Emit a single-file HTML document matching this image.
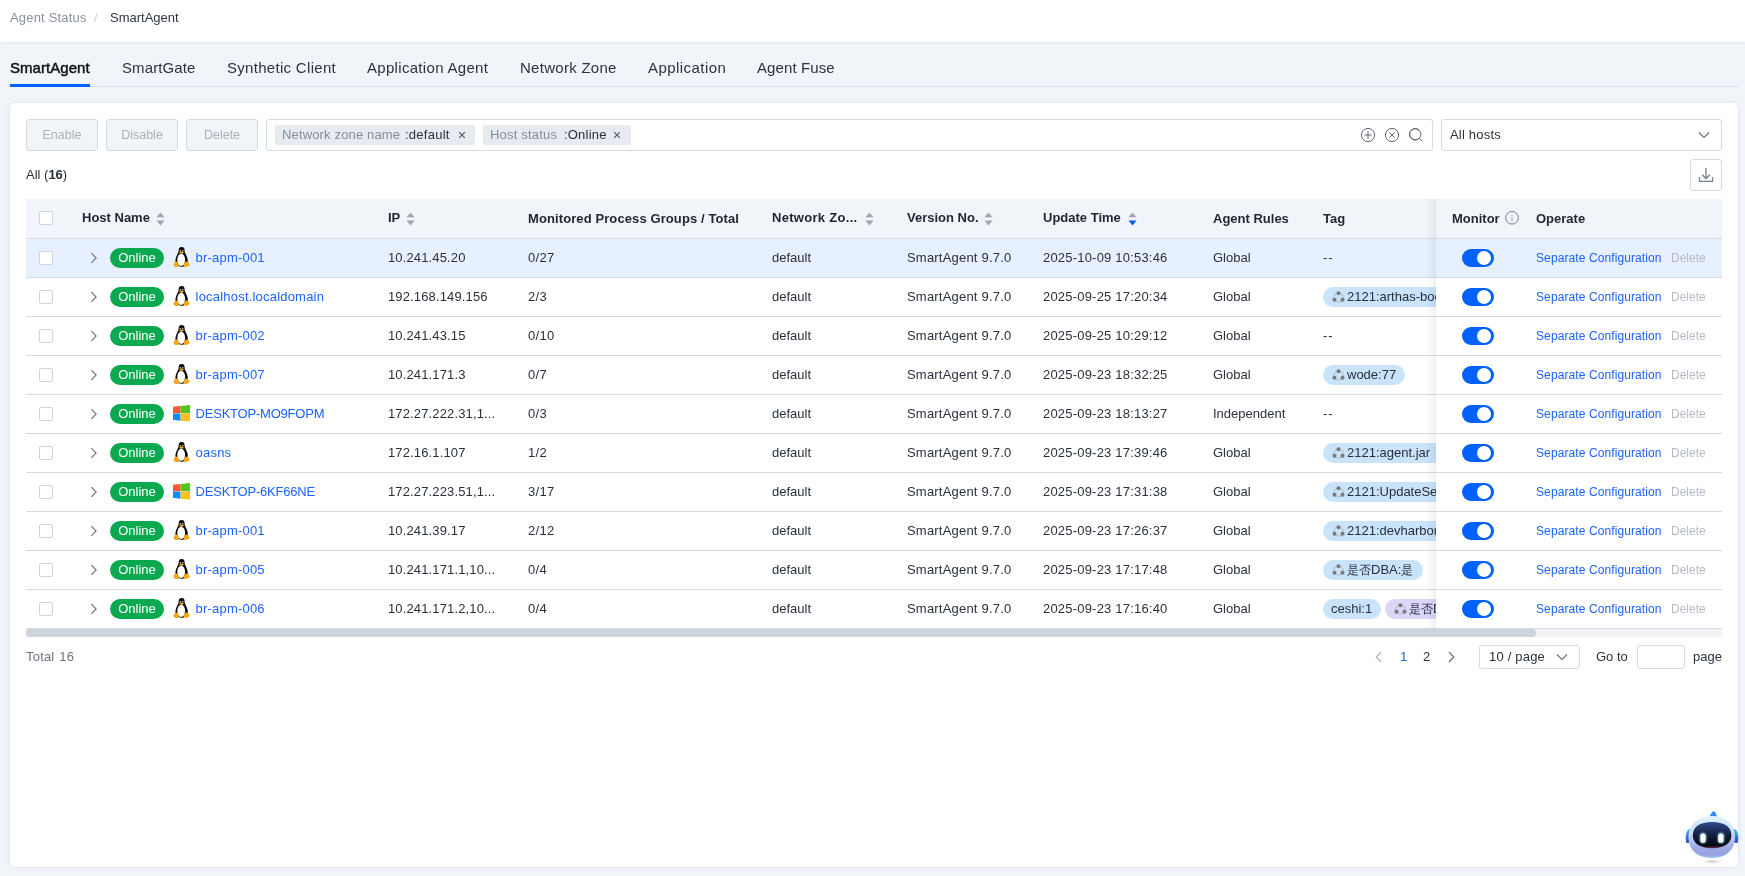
<!DOCTYPE html><html><head><meta charset="utf-8"><style>
*{box-sizing:border-box;margin:0;padding:0}
html,body{width:1745px;height:876px;overflow:hidden}
body{background:#f1f4f8;font-family:"Liberation Sans",sans-serif;color:#2a313c;position:relative;font-size:13px}
.a{position:absolute;white-space:nowrap}
.top{position:absolute;left:0;top:0;width:1745px;height:42px;background:#fff;box-shadow:0 1px 3px rgba(0,0,0,0.07)}
.tab{position:absolute;top:58px;font-size:15px;line-height:20px;color:#2b3340;white-space:nowrap}
.card{position:absolute;left:10px;top:103px;width:1728px;height:764px;background:#fff;border-radius:5px;box-shadow:0 0 4px rgba(0,0,0,0.1)}
.btn{position:absolute;top:119px;width:72px;height:32px;border:1px solid #d5dbe3;background:#f2f5f8;border-radius:3px;color:#a9b1bd;font-size:12.5px;line-height:30px;text-align:center}
.inp{position:absolute;border:1px solid #d5dbe3;border-radius:3px;background:#fff}
.ftag{position:absolute;top:125px;height:20px;background:#e7eaef;border-radius:2px;line-height:20px;font-size:13px;white-space:nowrap}
.ftag .k{color:#878e99}.ftag .v{color:#2a313c}
.th{position:absolute;top:199px;height:39px;line-height:37px;font-weight:bold;color:#1f2631;white-space:nowrap}
.sort{position:absolute;top:212px}
.row{position:absolute;left:26px;width:1696px;height:39px;border-bottom:1px solid #d6dbe3}
.cell{position:absolute;line-height:38px;white-space:nowrap;color:#2a313c}
.cb{position:absolute;width:14px;height:14px;border:1px solid #cfd4db;border-radius:2px;background:#fff}
.chev{position:absolute}
.badge{position:absolute;width:54px;height:20px;border-radius:10px;background:#0aa84f;color:#fff;text-align:center;line-height:20px;font-size:13px}
.os{position:absolute}
.link{color:#1d63ff}
.tag{position:absolute;height:20px;border-radius:10px;background:#c9e3fb;line-height:20px;font-size:13px;white-space:nowrap;color:#27303b;overflow:hidden}
.tag.p{background:#dcd6fa}
.ti{position:absolute;top:3.5px}
.tog{position:absolute;width:32px;height:18px;border-radius:9px;background:#0061ff}
.tog:after{content:"";position:absolute;right:3px;top:2px;width:14px;height:14px;border-radius:7px;background:#fff}
</style></head><body><div style="position:absolute;left:0;top:0;width:1745px;height:876px;will-change:transform">

<div class="top"></div>
<div class="a" style="left:10px;top:10px;line-height:16px;font-size:13px;color:#8a919b;letter-spacing:0.18px">Agent Status</div>
<div class="a" style="left:94px;top:10px;line-height:16px;font-size:13px;color:#cdd2d9">/</div>
<div class="a" style="left:110px;top:10px;line-height:16px;font-size:13px;color:#2f3641">SmartAgent</div>
<div class="a" style="left:10px;top:86px;width:1728px;height:1px;background:#d9dde3"></div>
<div class="tab" style="left:10px;color:#0d0f12;-webkit-text-stroke:0.45px #0d0f12;letter-spacing:0.05px">SmartAgent</div>
<div class="a" style="left:10px;top:84px;width:80px;height:3px;background:#0061ff"></div>
<div class="tab" style="left:122px;letter-spacing:0.1px">SmartGate</div>
<div class="tab" style="left:227px;letter-spacing:0.3px">Synthetic Client</div>
<div class="tab" style="left:367px;letter-spacing:0.31px">Application Agent</div>
<div class="tab" style="left:520px;letter-spacing:0.28px">Network Zone</div>
<div class="tab" style="left:648px;letter-spacing:0.45px">Application</div>
<div class="tab" style="left:757px;letter-spacing:0.1px">Agent Fuse</div>
<div class="card"></div>
<div class="btn" style="left:26px">Enable</div>
<div class="btn" style="left:106px">Disable</div>
<div class="btn" style="left:186px">Delete</div>
<div class="inp" style="left:266px;top:119px;width:1167px;height:32px"></div>
<div class="ftag" style="left:275px;width:200px"><span class="a k" style="left:7px;letter-spacing:0.15px">Network zone name</span><span class="a v" style="left:130px;letter-spacing:0.25px">:default</span><svg class="a" style="left:183px;top:6px" width="8" height="8" viewBox="0 0 8 8"><path d="M1.2 1.2L6.8 6.8M6.8 1.2L1.2 6.8" stroke="#50575f" stroke-width="1.1"/></svg></div>
<div class="ftag" style="left:483px;width:148px"><span class="a k" style="left:7px;letter-spacing:0.2px">Host status</span><span class="a v" style="left:81px;letter-spacing:0.2px">:Online</span><svg class="a" style="left:130px;top:6px" width="8" height="8" viewBox="0 0 8 8"><path d="M1.2 1.2L6.8 6.8M6.8 1.2L1.2 6.8" stroke="#50575f" stroke-width="1.1"/></svg></div>
<svg class="a" style="left:1359px;top:126px" width="60" height="18" viewBox="0 0 60 18">
<g fill="none" stroke="#5f6773" stroke-width="1">
<circle cx="9" cy="9" r="6.6"/><path d="M9 5.4V12.6M5.4 9H12.6"/>
<circle cx="33" cy="9" r="6.6"/><path d="M30.4 6.4L35.6 11.6M35.6 6.4L30.4 11.6"/>
<circle cx="56" cy="8.3" r="5.6"/><path d="M60 12.5L63.5 16" />
</g></svg>
<svg class="a" style="left:1405px;top:126px" width="22" height="20" viewBox="0 0 22 20"><g fill="none" stroke="#5f6773" stroke-width="1"><circle cx="10.3" cy="8.3" r="5.6"/><path d="M14.3 12.3L17.3 15.3"/></g></svg>
<div class="inp" style="left:1441px;top:119px;width:281px;height:32px"></div>
<div class="a" style="left:1450px;top:119px;line-height:32px;font-size:13px;color:#2a313c;letter-spacing:0.2px">All hosts</div>
<svg class="a" style="left:1698px;top:131px" width="12" height="8" viewBox="0 0 12 8"><path d="M1 1.5L6 6.5L11 1.5" fill="none" stroke="#6b7380" stroke-width="1.2"/></svg>
<div class="a" style="left:26px;top:167px;line-height:16px;font-size:13px;color:#2a313c">All (<b>16</b>)</div>
<div class="inp" style="left:1690px;top:159px;width:32px;height:32px"></div>
<svg class="a" style="left:1697px;top:166px" width="18" height="18" viewBox="0 0 18 18"><g fill="none" stroke="#7a808a" stroke-width="1.3"><path d="M9 2V12.5M5.2 8.8L9 12.5L12.8 8.8"/><path d="M2.5 11V15.3H15.5V11"/></g></svg>
<div class="a" style="left:26px;top:199px;width:1696px;height:40px;background:#f1f4f8;border-bottom:1px solid #d8dce3"></div>
<div class="cb" style="left:39px;top:211px"></div>
<div class="th" style="left:82px;top:199px">Host Name</div>
<div class="th" style="left:388px;top:199px">IP</div>
<div class="th" style="left:528px;top:200px"><span style='letter-spacing:0.1px'>Monitored Process Groups / Total</span></div>
<div class="th" style="left:772px;top:199px"><span style='letter-spacing:0.3px'>Network Zo...</span></div>
<div class="th" style="left:907px;top:199px">Version No.</div>
<div class="th" style="left:1043px;top:199px">Update Time</div>
<div class="th" style="left:1213px;top:200px">Agent Rules</div>
<div class="th" style="left:1323px;top:200px">Tag</div>
<svg class="sort" style="left:156px" width="9" height="14" viewBox="0 0 9 14"><path d="M0.5 5.2 L4.5 0.4 L8.5 5.2Z" fill="#9ea6b3"/><path d="M0.5 8.4 L4.5 13.4 L8.5 8.4Z" fill="#9ea6b3"/></svg>
<svg class="sort" style="left:406px" width="9" height="14" viewBox="0 0 9 14"><path d="M0.5 5.2 L4.5 0.4 L8.5 5.2Z" fill="#9ea6b3"/><path d="M0.5 8.4 L4.5 13.4 L8.5 8.4Z" fill="#9ea6b3"/></svg>
<svg class="sort" style="left:865px" width="9" height="14" viewBox="0 0 9 14"><path d="M0.5 5.2 L4.5 0.4 L8.5 5.2Z" fill="#9ea6b3"/><path d="M0.5 8.4 L4.5 13.4 L8.5 8.4Z" fill="#9ea6b3"/></svg>
<svg class="sort" style="left:984px" width="9" height="14" viewBox="0 0 9 14"><path d="M0.5 5.2 L4.5 0.4 L8.5 5.2Z" fill="#9ea6b3"/><path d="M0.5 8.4 L4.5 13.4 L8.5 8.4Z" fill="#9ea6b3"/></svg>
<svg class="sort" style="left:1128px" width="9" height="14" viewBox="0 0 9 14"><path d="M0.5 5.2 L4.5 0.4 L8.5 5.2Z" fill="#9ea6b3"/><path d="M0.5 8.4 L4.5 13.4 L8.5 8.4Z" fill="#0a5cff"/></svg>
<div class="row" style="top:239px;background:#e7f0fe"></div>
<div class="cb" style="left:39px;top:251px"></div>
<svg class="chev" style="left:90px;top:252px" width="8" height="12" viewBox="0 0 8 12"><path d="M1.4 1.2L6.1 6L1.4 10.8" fill="none" stroke="#737373" stroke-width="1.15"/></svg>
<div class="badge" style="left:110px;top:248px">Online</div>
<svg class="os" style="left:173px;top:247px" width="17" height="21" viewBox="0 0 17 21"><path d="M5.7 4.6 C4.4 7.6 2.5 10.6 2.4 13.6 C2.4 16.6 4.8 19.6 8.5 19.7 C12.2 19.6 14.8 16.6 14.8 13.4 C14.6 10.4 12.8 7.6 11.5 4.6 Z" fill="#0b0b0b"/><ellipse cx="8.6" cy="3.5" rx="3.0" ry="3.4" fill="#0b0b0b"/><ellipse cx="8.2" cy="12.9" rx="3.9" ry="6.1" fill="#fff"/><circle cx="7.3" cy="3.8" r="0.75" fill="#d8d8d8"/><circle cx="9.8" cy="3.8" r="0.75" fill="#d8d8d8"/><ellipse cx="8.5" cy="5.7" rx="2.2" ry="1.1" fill="#efa91c"/><path d="M0.3 18.2 L1.8 14.8 L4.5 14.6 L6.4 17.8 L5.6 19.9 L2.2 20.1 Z" fill="#efa91c"/><path d="M10.8 19.8 L10.6 17.2 L12.6 14.5 L15.2 14.9 L17 18 L13.5 20.1 Z" fill="#efa91c"/></svg>
<div class="cell link" style="left:195.6px;top:239px;letter-spacing:0.2px">br-apm-001</div>
<div class="cell" style="left:388px;top:239px;letter-spacing:0.14px">10.241.45.20</div>
<div class="cell" style="left:528px;top:239px;letter-spacing:0.3px">0/27</div>
<div class="cell" style="left:772px;top:239px">default</div>
<div class="cell" style="left:907px;top:239px;letter-spacing:0.2px">SmartAgent 9.7.0</div>
<div class="cell" style="left:1043px;top:239px;letter-spacing:0.2px">2025-10-09 10:53:46</div>
<div class="cell" style="left:1213px;top:239px">Global</div>
<div class="cell" style="left:1323px;top:239px;letter-spacing:1px">--</div>
<div class="row" style="top:278px;background:#fff"></div>
<div class="cb" style="left:39px;top:290px"></div>
<svg class="chev" style="left:90px;top:291px" width="8" height="12" viewBox="0 0 8 12"><path d="M1.4 1.2L6.1 6L1.4 10.8" fill="none" stroke="#737373" stroke-width="1.15"/></svg>
<div class="badge" style="left:110px;top:287px">Online</div>
<svg class="os" style="left:173px;top:286px" width="17" height="21" viewBox="0 0 17 21"><path d="M5.7 4.6 C4.4 7.6 2.5 10.6 2.4 13.6 C2.4 16.6 4.8 19.6 8.5 19.7 C12.2 19.6 14.8 16.6 14.8 13.4 C14.6 10.4 12.8 7.6 11.5 4.6 Z" fill="#0b0b0b"/><ellipse cx="8.6" cy="3.5" rx="3.0" ry="3.4" fill="#0b0b0b"/><ellipse cx="8.2" cy="12.9" rx="3.9" ry="6.1" fill="#fff"/><circle cx="7.3" cy="3.8" r="0.75" fill="#d8d8d8"/><circle cx="9.8" cy="3.8" r="0.75" fill="#d8d8d8"/><ellipse cx="8.5" cy="5.7" rx="2.2" ry="1.1" fill="#efa91c"/><path d="M0.3 18.2 L1.8 14.8 L4.5 14.6 L6.4 17.8 L5.6 19.9 L2.2 20.1 Z" fill="#efa91c"/><path d="M10.8 19.8 L10.6 17.2 L12.6 14.5 L15.2 14.9 L17 18 L13.5 20.1 Z" fill="#efa91c"/></svg>
<div class="cell link" style="left:195.6px;top:278px;letter-spacing:0.2px">localhost.localdomain</div>
<div class="cell" style="left:388px;top:278px;letter-spacing:0.14px">192.168.149.156</div>
<div class="cell" style="left:528px;top:278px;letter-spacing:0.3px">2/3</div>
<div class="cell" style="left:772px;top:278px">default</div>
<div class="cell" style="left:907px;top:278px;letter-spacing:0.2px">SmartAgent 9.7.0</div>
<div class="cell" style="left:1043px;top:278px;letter-spacing:0.2px">2025-09-25 17:20:34</div>
<div class="cell" style="left:1213px;top:278px">Global</div>
<div class="tag" style="left:1323px;top:287px;width:130px"><svg class="ti" style="left:9px" width="13" height="13" viewBox="0 0 13 13"><circle cx="6.5" cy="6.5" r="4.5" fill="none" stroke="#858585" stroke-width="0.75" stroke-dasharray="1.2 0.7"/><circle cx="6.5" cy="2.2" r="2.05" fill="#7d7979"/><circle cx="2.5" cy="8.8" r="2.05" fill="#7d7979"/><circle cx="10.5" cy="8.8" r="2.05" fill="#7d7979"/></svg><span class="a" style="left:24px">2121:arthas-boot</span></div>
<div class="row" style="top:317px;background:#fff"></div>
<div class="cb" style="left:39px;top:329px"></div>
<svg class="chev" style="left:90px;top:330px" width="8" height="12" viewBox="0 0 8 12"><path d="M1.4 1.2L6.1 6L1.4 10.8" fill="none" stroke="#737373" stroke-width="1.15"/></svg>
<div class="badge" style="left:110px;top:326px">Online</div>
<svg class="os" style="left:173px;top:325px" width="17" height="21" viewBox="0 0 17 21"><path d="M5.7 4.6 C4.4 7.6 2.5 10.6 2.4 13.6 C2.4 16.6 4.8 19.6 8.5 19.7 C12.2 19.6 14.8 16.6 14.8 13.4 C14.6 10.4 12.8 7.6 11.5 4.6 Z" fill="#0b0b0b"/><ellipse cx="8.6" cy="3.5" rx="3.0" ry="3.4" fill="#0b0b0b"/><ellipse cx="8.2" cy="12.9" rx="3.9" ry="6.1" fill="#fff"/><circle cx="7.3" cy="3.8" r="0.75" fill="#d8d8d8"/><circle cx="9.8" cy="3.8" r="0.75" fill="#d8d8d8"/><ellipse cx="8.5" cy="5.7" rx="2.2" ry="1.1" fill="#efa91c"/><path d="M0.3 18.2 L1.8 14.8 L4.5 14.6 L6.4 17.8 L5.6 19.9 L2.2 20.1 Z" fill="#efa91c"/><path d="M10.8 19.8 L10.6 17.2 L12.6 14.5 L15.2 14.9 L17 18 L13.5 20.1 Z" fill="#efa91c"/></svg>
<div class="cell link" style="left:195.6px;top:317px;letter-spacing:0.2px">br-apm-002</div>
<div class="cell" style="left:388px;top:317px;letter-spacing:0.14px">10.241.43.15</div>
<div class="cell" style="left:528px;top:317px;letter-spacing:0.3px">0/10</div>
<div class="cell" style="left:772px;top:317px">default</div>
<div class="cell" style="left:907px;top:317px;letter-spacing:0.2px">SmartAgent 9.7.0</div>
<div class="cell" style="left:1043px;top:317px;letter-spacing:0.2px">2025-09-25 10:29:12</div>
<div class="cell" style="left:1213px;top:317px">Global</div>
<div class="cell" style="left:1323px;top:317px;letter-spacing:1px">--</div>
<div class="row" style="top:356px;background:#fff"></div>
<div class="cb" style="left:39px;top:368px"></div>
<svg class="chev" style="left:90px;top:369px" width="8" height="12" viewBox="0 0 8 12"><path d="M1.4 1.2L6.1 6L1.4 10.8" fill="none" stroke="#737373" stroke-width="1.15"/></svg>
<div class="badge" style="left:110px;top:365px">Online</div>
<svg class="os" style="left:173px;top:364px" width="17" height="21" viewBox="0 0 17 21"><path d="M5.7 4.6 C4.4 7.6 2.5 10.6 2.4 13.6 C2.4 16.6 4.8 19.6 8.5 19.7 C12.2 19.6 14.8 16.6 14.8 13.4 C14.6 10.4 12.8 7.6 11.5 4.6 Z" fill="#0b0b0b"/><ellipse cx="8.6" cy="3.5" rx="3.0" ry="3.4" fill="#0b0b0b"/><ellipse cx="8.2" cy="12.9" rx="3.9" ry="6.1" fill="#fff"/><circle cx="7.3" cy="3.8" r="0.75" fill="#d8d8d8"/><circle cx="9.8" cy="3.8" r="0.75" fill="#d8d8d8"/><ellipse cx="8.5" cy="5.7" rx="2.2" ry="1.1" fill="#efa91c"/><path d="M0.3 18.2 L1.8 14.8 L4.5 14.6 L6.4 17.8 L5.6 19.9 L2.2 20.1 Z" fill="#efa91c"/><path d="M10.8 19.8 L10.6 17.2 L12.6 14.5 L15.2 14.9 L17 18 L13.5 20.1 Z" fill="#efa91c"/></svg>
<div class="cell link" style="left:195.6px;top:356px;letter-spacing:0.2px">br-apm-007</div>
<div class="cell" style="left:388px;top:356px;letter-spacing:0.14px">10.241.171.3</div>
<div class="cell" style="left:528px;top:356px;letter-spacing:0.3px">0/7</div>
<div class="cell" style="left:772px;top:356px">default</div>
<div class="cell" style="left:907px;top:356px;letter-spacing:0.2px">SmartAgent 9.7.0</div>
<div class="cell" style="left:1043px;top:356px;letter-spacing:0.2px">2025-09-23 18:32:25</div>
<div class="cell" style="left:1213px;top:356px">Global</div>
<div class="tag" style="left:1323px;top:365px;width:82px"><svg class="ti" style="left:9px" width="13" height="13" viewBox="0 0 13 13"><circle cx="6.5" cy="6.5" r="4.5" fill="none" stroke="#858585" stroke-width="0.75" stroke-dasharray="1.2 0.7"/><circle cx="6.5" cy="2.2" r="2.05" fill="#7d7979"/><circle cx="2.5" cy="8.8" r="2.05" fill="#7d7979"/><circle cx="10.5" cy="8.8" r="2.05" fill="#7d7979"/></svg><span class="a" style="left:24px">wode:77</span></div>
<div class="row" style="top:395px;background:#fff"></div>
<div class="cb" style="left:39px;top:407px"></div>
<svg class="chev" style="left:90px;top:408px" width="8" height="12" viewBox="0 0 8 12"><path d="M1.4 1.2L6.1 6L1.4 10.8" fill="none" stroke="#737373" stroke-width="1.15"/></svg>
<div class="badge" style="left:110px;top:404px">Online</div>
<svg class="os" style="left:173.4px;top:404.6px" width="17" height="17" viewBox="0 0 17 17"><path d="M0 1.8 L7.5 0.9 L7.5 8.25 L0 8.25Z" fill="#ff5a2e"/><path d="M7.6 0.9 L17 0 L17 8.25 L7.6 8.25Z" fill="#55c31b"/><path d="M0 8.4 L7.5 8.4 L7.5 15.7 L0 14.7Z" fill="#0b8cf9"/><path d="M7.6 8.4 L17 8.4 L17 16.6 L7.6 15.7Z" fill="#ffbf1f"/></svg>
<div class="cell link" style="left:195.6px;top:395px;letter-spacing:-0.22px">DESKTOP-MO9FOPM</div>
<div class="cell" style="left:388px;top:395px;letter-spacing:0.14px">172.27.222.31,1...</div>
<div class="cell" style="left:528px;top:395px;letter-spacing:0.3px">0/3</div>
<div class="cell" style="left:772px;top:395px">default</div>
<div class="cell" style="left:907px;top:395px;letter-spacing:0.2px">SmartAgent 9.7.0</div>
<div class="cell" style="left:1043px;top:395px;letter-spacing:0.2px">2025-09-23 18:13:27</div>
<div class="cell" style="left:1213px;top:395px">Independent</div>
<div class="cell" style="left:1323px;top:395px;letter-spacing:1px">--</div>
<div class="row" style="top:434px;background:#fff"></div>
<div class="cb" style="left:39px;top:446px"></div>
<svg class="chev" style="left:90px;top:447px" width="8" height="12" viewBox="0 0 8 12"><path d="M1.4 1.2L6.1 6L1.4 10.8" fill="none" stroke="#737373" stroke-width="1.15"/></svg>
<div class="badge" style="left:110px;top:443px">Online</div>
<svg class="os" style="left:173px;top:442px" width="17" height="21" viewBox="0 0 17 21"><path d="M5.7 4.6 C4.4 7.6 2.5 10.6 2.4 13.6 C2.4 16.6 4.8 19.6 8.5 19.7 C12.2 19.6 14.8 16.6 14.8 13.4 C14.6 10.4 12.8 7.6 11.5 4.6 Z" fill="#0b0b0b"/><ellipse cx="8.6" cy="3.5" rx="3.0" ry="3.4" fill="#0b0b0b"/><ellipse cx="8.2" cy="12.9" rx="3.9" ry="6.1" fill="#fff"/><circle cx="7.3" cy="3.8" r="0.75" fill="#d8d8d8"/><circle cx="9.8" cy="3.8" r="0.75" fill="#d8d8d8"/><ellipse cx="8.5" cy="5.7" rx="2.2" ry="1.1" fill="#efa91c"/><path d="M0.3 18.2 L1.8 14.8 L4.5 14.6 L6.4 17.8 L5.6 19.9 L2.2 20.1 Z" fill="#efa91c"/><path d="M10.8 19.8 L10.6 17.2 L12.6 14.5 L15.2 14.9 L17 18 L13.5 20.1 Z" fill="#efa91c"/></svg>
<div class="cell link" style="left:195.6px;top:434px;letter-spacing:0.2px">oasns</div>
<div class="cell" style="left:388px;top:434px;letter-spacing:0.14px">172.16.1.107</div>
<div class="cell" style="left:528px;top:434px;letter-spacing:0.3px">1/2</div>
<div class="cell" style="left:772px;top:434px">default</div>
<div class="cell" style="left:907px;top:434px;letter-spacing:0.2px">SmartAgent 9.7.0</div>
<div class="cell" style="left:1043px;top:434px;letter-spacing:0.2px">2025-09-23 17:39:46</div>
<div class="cell" style="left:1213px;top:434px">Global</div>
<div class="tag" style="left:1323px;top:443px;width:130px"><svg class="ti" style="left:9px" width="13" height="13" viewBox="0 0 13 13"><circle cx="6.5" cy="6.5" r="4.5" fill="none" stroke="#858585" stroke-width="0.75" stroke-dasharray="1.2 0.7"/><circle cx="6.5" cy="2.2" r="2.05" fill="#7d7979"/><circle cx="2.5" cy="8.8" r="2.05" fill="#7d7979"/><circle cx="10.5" cy="8.8" r="2.05" fill="#7d7979"/></svg><span class="a" style="left:24px">2121:agent.jar</span></div>
<div class="row" style="top:473px;background:#fff"></div>
<div class="cb" style="left:39px;top:485px"></div>
<svg class="chev" style="left:90px;top:486px" width="8" height="12" viewBox="0 0 8 12"><path d="M1.4 1.2L6.1 6L1.4 10.8" fill="none" stroke="#737373" stroke-width="1.15"/></svg>
<div class="badge" style="left:110px;top:482px">Online</div>
<svg class="os" style="left:173.4px;top:482.6px" width="17" height="17" viewBox="0 0 17 17"><path d="M0 1.8 L7.5 0.9 L7.5 8.25 L0 8.25Z" fill="#ff5a2e"/><path d="M7.6 0.9 L17 0 L17 8.25 L7.6 8.25Z" fill="#55c31b"/><path d="M0 8.4 L7.5 8.4 L7.5 15.7 L0 14.7Z" fill="#0b8cf9"/><path d="M7.6 8.4 L17 8.4 L17 16.6 L7.6 15.7Z" fill="#ffbf1f"/></svg>
<div class="cell link" style="left:195.6px;top:473px;letter-spacing:-0.22px">DESKTOP-6KF66NE</div>
<div class="cell" style="left:388px;top:473px;letter-spacing:0.14px">172.27.223.51,1...</div>
<div class="cell" style="left:528px;top:473px;letter-spacing:0.3px">3/17</div>
<div class="cell" style="left:772px;top:473px">default</div>
<div class="cell" style="left:907px;top:473px;letter-spacing:0.2px">SmartAgent 9.7.0</div>
<div class="cell" style="left:1043px;top:473px;letter-spacing:0.2px">2025-09-23 17:31:38</div>
<div class="cell" style="left:1213px;top:473px">Global</div>
<div class="tag" style="left:1323px;top:482px;width:130px"><svg class="ti" style="left:9px" width="13" height="13" viewBox="0 0 13 13"><circle cx="6.5" cy="6.5" r="4.5" fill="none" stroke="#858585" stroke-width="0.75" stroke-dasharray="1.2 0.7"/><circle cx="6.5" cy="2.2" r="2.05" fill="#7d7979"/><circle cx="2.5" cy="8.8" r="2.05" fill="#7d7979"/><circle cx="10.5" cy="8.8" r="2.05" fill="#7d7979"/></svg><span class="a" style="left:24px">2121:UpdateService</span></div>
<div class="row" style="top:512px;background:#fff"></div>
<div class="cb" style="left:39px;top:524px"></div>
<svg class="chev" style="left:90px;top:525px" width="8" height="12" viewBox="0 0 8 12"><path d="M1.4 1.2L6.1 6L1.4 10.8" fill="none" stroke="#737373" stroke-width="1.15"/></svg>
<div class="badge" style="left:110px;top:521px">Online</div>
<svg class="os" style="left:173px;top:520px" width="17" height="21" viewBox="0 0 17 21"><path d="M5.7 4.6 C4.4 7.6 2.5 10.6 2.4 13.6 C2.4 16.6 4.8 19.6 8.5 19.7 C12.2 19.6 14.8 16.6 14.8 13.4 C14.6 10.4 12.8 7.6 11.5 4.6 Z" fill="#0b0b0b"/><ellipse cx="8.6" cy="3.5" rx="3.0" ry="3.4" fill="#0b0b0b"/><ellipse cx="8.2" cy="12.9" rx="3.9" ry="6.1" fill="#fff"/><circle cx="7.3" cy="3.8" r="0.75" fill="#d8d8d8"/><circle cx="9.8" cy="3.8" r="0.75" fill="#d8d8d8"/><ellipse cx="8.5" cy="5.7" rx="2.2" ry="1.1" fill="#efa91c"/><path d="M0.3 18.2 L1.8 14.8 L4.5 14.6 L6.4 17.8 L5.6 19.9 L2.2 20.1 Z" fill="#efa91c"/><path d="M10.8 19.8 L10.6 17.2 L12.6 14.5 L15.2 14.9 L17 18 L13.5 20.1 Z" fill="#efa91c"/></svg>
<div class="cell link" style="left:195.6px;top:512px;letter-spacing:0.2px">br-apm-001</div>
<div class="cell" style="left:388px;top:512px;letter-spacing:0.14px">10.241.39.17</div>
<div class="cell" style="left:528px;top:512px;letter-spacing:0.3px">2/12</div>
<div class="cell" style="left:772px;top:512px">default</div>
<div class="cell" style="left:907px;top:512px;letter-spacing:0.2px">SmartAgent 9.7.0</div>
<div class="cell" style="left:1043px;top:512px;letter-spacing:0.2px">2025-09-23 17:26:37</div>
<div class="cell" style="left:1213px;top:512px">Global</div>
<div class="tag" style="left:1323px;top:521px;width:130px"><svg class="ti" style="left:9px" width="13" height="13" viewBox="0 0 13 13"><circle cx="6.5" cy="6.5" r="4.5" fill="none" stroke="#858585" stroke-width="0.75" stroke-dasharray="1.2 0.7"/><circle cx="6.5" cy="2.2" r="2.05" fill="#7d7979"/><circle cx="2.5" cy="8.8" r="2.05" fill="#7d7979"/><circle cx="10.5" cy="8.8" r="2.05" fill="#7d7979"/></svg><span class="a" style="left:24px">2121:devharbor</span></div>
<div class="row" style="top:551px;background:#fff"></div>
<div class="cb" style="left:39px;top:563px"></div>
<svg class="chev" style="left:90px;top:564px" width="8" height="12" viewBox="0 0 8 12"><path d="M1.4 1.2L6.1 6L1.4 10.8" fill="none" stroke="#737373" stroke-width="1.15"/></svg>
<div class="badge" style="left:110px;top:560px">Online</div>
<svg class="os" style="left:173px;top:559px" width="17" height="21" viewBox="0 0 17 21"><path d="M5.7 4.6 C4.4 7.6 2.5 10.6 2.4 13.6 C2.4 16.6 4.8 19.6 8.5 19.7 C12.2 19.6 14.8 16.6 14.8 13.4 C14.6 10.4 12.8 7.6 11.5 4.6 Z" fill="#0b0b0b"/><ellipse cx="8.6" cy="3.5" rx="3.0" ry="3.4" fill="#0b0b0b"/><ellipse cx="8.2" cy="12.9" rx="3.9" ry="6.1" fill="#fff"/><circle cx="7.3" cy="3.8" r="0.75" fill="#d8d8d8"/><circle cx="9.8" cy="3.8" r="0.75" fill="#d8d8d8"/><ellipse cx="8.5" cy="5.7" rx="2.2" ry="1.1" fill="#efa91c"/><path d="M0.3 18.2 L1.8 14.8 L4.5 14.6 L6.4 17.8 L5.6 19.9 L2.2 20.1 Z" fill="#efa91c"/><path d="M10.8 19.8 L10.6 17.2 L12.6 14.5 L15.2 14.9 L17 18 L13.5 20.1 Z" fill="#efa91c"/></svg>
<div class="cell link" style="left:195.6px;top:551px;letter-spacing:0.2px">br-apm-005</div>
<div class="cell" style="left:388px;top:551px;letter-spacing:0.14px">10.241.171.1,10...</div>
<div class="cell" style="left:528px;top:551px;letter-spacing:0.3px">0/4</div>
<div class="cell" style="left:772px;top:551px">default</div>
<div class="cell" style="left:907px;top:551px;letter-spacing:0.2px">SmartAgent 9.7.0</div>
<div class="cell" style="left:1043px;top:551px;letter-spacing:0.2px">2025-09-23 17:17:48</div>
<div class="cell" style="left:1213px;top:551px">Global</div>
<div class="tag" style="left:1323px;top:560px;width:100px"><svg class="ti" style="left:9px" width="13" height="13" viewBox="0 0 13 13"><circle cx="6.5" cy="6.5" r="4.5" fill="none" stroke="#858585" stroke-width="0.75" stroke-dasharray="1.2 0.7"/><circle cx="6.5" cy="2.2" r="2.05" fill="#7d7979"/><circle cx="2.5" cy="8.8" r="2.05" fill="#7d7979"/><circle cx="10.5" cy="8.8" r="2.05" fill="#7d7979"/></svg><span class="a" style="left:24px"><span style='font-size:12px'>是否</span>DBA:<span style='font-size:12px'>是</span></span></div>
<div class="row" style="top:590px;background:#fff"></div>
<div class="cb" style="left:39px;top:602px"></div>
<svg class="chev" style="left:90px;top:603px" width="8" height="12" viewBox="0 0 8 12"><path d="M1.4 1.2L6.1 6L1.4 10.8" fill="none" stroke="#737373" stroke-width="1.15"/></svg>
<div class="badge" style="left:110px;top:599px">Online</div>
<svg class="os" style="left:173px;top:598px" width="17" height="21" viewBox="0 0 17 21"><path d="M5.7 4.6 C4.4 7.6 2.5 10.6 2.4 13.6 C2.4 16.6 4.8 19.6 8.5 19.7 C12.2 19.6 14.8 16.6 14.8 13.4 C14.6 10.4 12.8 7.6 11.5 4.6 Z" fill="#0b0b0b"/><ellipse cx="8.6" cy="3.5" rx="3.0" ry="3.4" fill="#0b0b0b"/><ellipse cx="8.2" cy="12.9" rx="3.9" ry="6.1" fill="#fff"/><circle cx="7.3" cy="3.8" r="0.75" fill="#d8d8d8"/><circle cx="9.8" cy="3.8" r="0.75" fill="#d8d8d8"/><ellipse cx="8.5" cy="5.7" rx="2.2" ry="1.1" fill="#efa91c"/><path d="M0.3 18.2 L1.8 14.8 L4.5 14.6 L6.4 17.8 L5.6 19.9 L2.2 20.1 Z" fill="#efa91c"/><path d="M10.8 19.8 L10.6 17.2 L12.6 14.5 L15.2 14.9 L17 18 L13.5 20.1 Z" fill="#efa91c"/></svg>
<div class="cell link" style="left:195.6px;top:590px;letter-spacing:0.2px">br-apm-006</div>
<div class="cell" style="left:388px;top:590px;letter-spacing:0.14px">10.241.171.2,10...</div>
<div class="cell" style="left:528px;top:590px;letter-spacing:0.3px">0/4</div>
<div class="cell" style="left:772px;top:590px">default</div>
<div class="cell" style="left:907px;top:590px;letter-spacing:0.2px">SmartAgent 9.7.0</div>
<div class="cell" style="left:1043px;top:590px;letter-spacing:0.2px">2025-09-23 17:16:40</div>
<div class="cell" style="left:1213px;top:590px">Global</div>
<div class="tag" style="left:1323px;top:599px;width:58px"><span class="a" style="left:8px">ceshi:1</span></div>
<div class="tag p" style="left:1385px;top:599px;width:100px"><svg class="ti" style="left:9px" width="13" height="13" viewBox="0 0 13 13"><circle cx="6.5" cy="6.5" r="4.5" fill="none" stroke="#858585" stroke-width="0.75" stroke-dasharray="1.2 0.7"/><circle cx="6.5" cy="2.2" r="2.05" fill="#7d7979"/><circle cx="2.5" cy="8.8" r="2.05" fill="#7d7979"/><circle cx="10.5" cy="8.8" r="2.05" fill="#7d7979"/></svg><span class="a" style="left:24px"><span style='font-size:12px'>是否</span>DBA:<span style='font-size:12px'>是</span></span></div>
<div class="a" style="left:1436px;top:199px;width:286px;height:40px;background:#f1f4f8;border-bottom:1px solid #d8dce3"></div>
<div class="a" style="left:1426px;top:199px;width:10px;height:430px;background:linear-gradient(to right,rgba(0,0,0,0),rgba(0,0,0,0.06))"></div>
<div class="th" style="left:1452px;top:200px">Monitor</div>
<svg class="a" style="left:1505px;top:211px" width="15" height="15" viewBox="0 0 15 15"><circle cx="7" cy="6.8" r="6.3" fill="none" stroke="#6d737c" stroke-width="0.9"/><circle cx="7" cy="4" r="0.7" fill="#a3a8b0"/><path d="M7 5.8V10.6" stroke="#a3a8b0" stroke-width="0.9"/></svg>
<div class="th" style="left:1536px;top:200px">Operate</div>
<div class="a" style="left:1436px;top:239px;width:286px;height:39px;background:#e7f0fe;border-bottom:1px solid #d6dbe3"></div>
<div class="tog" style="left:1462px;top:249px"></div>
<div class="cell link" style="left:1536px;top:239px;font-size:12px;letter-spacing:0.1px">Separate Configuration</div>
<div class="cell" style="left:1671px;top:239px;font-size:12px;color:#b5bbc5">Delete</div>
<div class="a" style="left:1436px;top:278px;width:286px;height:39px;background:#fff;border-bottom:1px solid #d6dbe3"></div>
<div class="tog" style="left:1462px;top:288px"></div>
<div class="cell link" style="left:1536px;top:278px;font-size:12px;letter-spacing:0.1px">Separate Configuration</div>
<div class="cell" style="left:1671px;top:278px;font-size:12px;color:#b5bbc5">Delete</div>
<div class="a" style="left:1436px;top:317px;width:286px;height:39px;background:#fff;border-bottom:1px solid #d6dbe3"></div>
<div class="tog" style="left:1462px;top:327px"></div>
<div class="cell link" style="left:1536px;top:317px;font-size:12px;letter-spacing:0.1px">Separate Configuration</div>
<div class="cell" style="left:1671px;top:317px;font-size:12px;color:#b5bbc5">Delete</div>
<div class="a" style="left:1436px;top:356px;width:286px;height:39px;background:#fff;border-bottom:1px solid #d6dbe3"></div>
<div class="tog" style="left:1462px;top:366px"></div>
<div class="cell link" style="left:1536px;top:356px;font-size:12px;letter-spacing:0.1px">Separate Configuration</div>
<div class="cell" style="left:1671px;top:356px;font-size:12px;color:#b5bbc5">Delete</div>
<div class="a" style="left:1436px;top:395px;width:286px;height:39px;background:#fff;border-bottom:1px solid #d6dbe3"></div>
<div class="tog" style="left:1462px;top:405px"></div>
<div class="cell link" style="left:1536px;top:395px;font-size:12px;letter-spacing:0.1px">Separate Configuration</div>
<div class="cell" style="left:1671px;top:395px;font-size:12px;color:#b5bbc5">Delete</div>
<div class="a" style="left:1436px;top:434px;width:286px;height:39px;background:#fff;border-bottom:1px solid #d6dbe3"></div>
<div class="tog" style="left:1462px;top:444px"></div>
<div class="cell link" style="left:1536px;top:434px;font-size:12px;letter-spacing:0.1px">Separate Configuration</div>
<div class="cell" style="left:1671px;top:434px;font-size:12px;color:#b5bbc5">Delete</div>
<div class="a" style="left:1436px;top:473px;width:286px;height:39px;background:#fff;border-bottom:1px solid #d6dbe3"></div>
<div class="tog" style="left:1462px;top:483px"></div>
<div class="cell link" style="left:1536px;top:473px;font-size:12px;letter-spacing:0.1px">Separate Configuration</div>
<div class="cell" style="left:1671px;top:473px;font-size:12px;color:#b5bbc5">Delete</div>
<div class="a" style="left:1436px;top:512px;width:286px;height:39px;background:#fff;border-bottom:1px solid #d6dbe3"></div>
<div class="tog" style="left:1462px;top:522px"></div>
<div class="cell link" style="left:1536px;top:512px;font-size:12px;letter-spacing:0.1px">Separate Configuration</div>
<div class="cell" style="left:1671px;top:512px;font-size:12px;color:#b5bbc5">Delete</div>
<div class="a" style="left:1436px;top:551px;width:286px;height:39px;background:#fff;border-bottom:1px solid #d6dbe3"></div>
<div class="tog" style="left:1462px;top:561px"></div>
<div class="cell link" style="left:1536px;top:551px;font-size:12px;letter-spacing:0.1px">Separate Configuration</div>
<div class="cell" style="left:1671px;top:551px;font-size:12px;color:#b5bbc5">Delete</div>
<div class="a" style="left:1436px;top:590px;width:286px;height:39px;background:#fff;border-bottom:1px solid #d6dbe3"></div>
<div class="tog" style="left:1462px;top:600px"></div>
<div class="cell link" style="left:1536px;top:590px;font-size:12px;letter-spacing:0.1px">Separate Configuration</div>
<div class="cell" style="left:1671px;top:590px;font-size:12px;color:#b5bbc5">Delete</div>
<div class="a" style="left:26px;top:629px;width:1696px;height:8px;background:#f2f4f7"></div>
<div class="a" style="left:26px;top:629px;width:1510px;height:8px;background:#cdd3db;border-radius:4px"></div>
<div class="a" style="left:26px;top:648px;line-height:18px;font-size:13px;color:#6c737e;letter-spacing:0.2px;word-spacing:1px">Total 16</div>
<svg class="a" style="left:1374px;top:651px" width="9" height="12" viewBox="0 0 9 12"><path d="M7 1L2.2 6L7 11" fill="none" stroke="#a8aeb8" stroke-width="1.1"/></svg>
<div class="a" style="left:1400px;top:648px;line-height:18px;font-size:13px;color:#1d63ff">1</div>
<div class="a" style="left:1423px;top:648px;line-height:18px;font-size:13px;color:#2a313c">2</div>
<svg class="a" style="left:1447px;top:651px" width="9" height="12" viewBox="0 0 9 12"><path d="M2 1L6.8 6L2 11" fill="none" stroke="#5f6670" stroke-width="1.1"/></svg>
<div class="inp" style="left:1479px;top:645px;width:101px;height:24px"></div>
<div class="a" style="left:1489px;top:645px;line-height:24px;font-size:13px;color:#2a313c;letter-spacing:0.2px">10 / page</div>
<svg class="a" style="left:1556px;top:653px" width="12" height="8" viewBox="0 0 12 8"><path d="M1 1.5L6 6.5L11 1.5" fill="none" stroke="#6b7380" stroke-width="1.1"/></svg>
<div class="a" style="left:1596px;top:645px;line-height:24px;font-size:13px;color:#2a313c">Go to</div>
<div class="inp" style="left:1637px;top:645px;width:48px;height:24px"></div>
<div class="a" style="left:1693px;top:645px;line-height:24px;font-size:13px;color:#2a313c">page</div>
<svg class="a" style="left:1680px;top:806px" width="62" height="62" viewBox="0 0 62 62">
<defs>
<linearGradient id="rh" x1="0" y1="0" x2="0" y2="1"><stop offset="0" stop-color="#e0f5ff"/><stop offset="0.4" stop-color="#c8ddf6"/><stop offset="0.78" stop-color="#9aa8e3"/><stop offset="0.93" stop-color="#93a3e1"/><stop offset="1" stop-color="#a4d6f3"/></linearGradient>
<linearGradient id="ear" x1="0" y1="0" x2="0" y2="1"><stop offset="0" stop-color="#3cc8f2"/><stop offset="1" stop-color="#2a3ccb"/></linearGradient>
<linearGradient id="vis" x1="0" y1="0" x2="0" y2="1"><stop offset="0" stop-color="#2f4b8c"/><stop offset="0.55" stop-color="#121a38"/><stop offset="0.9" stop-color="#05070f"/><stop offset="1" stop-color="#6b2a55"/></linearGradient>
<radialGradient id="sh" cx="0.5" cy="0.5" r="0.5"><stop offset="0" stop-color="#c3c8d8"/><stop offset="1" stop-color="#ffffff" stop-opacity="0"/></radialGradient>
<filter id="gl" x="-1" y="-1" width="3" height="3"><feGaussianBlur stdDeviation="1"/></filter>
</defs>
<ellipse cx="32" cy="55.5" rx="14" ry="3.2" fill="url(#sh)"/>
<path d="M9 23 C5.5 25 5 33 6.5 37 L11.5 36.5 L11.5 24Z" fill="url(#ear)"/>
<path d="M55 23 C58.5 25 59 33 57.5 37 L52.5 36.5 L52.5 24Z" fill="url(#ear)"/>
<path d="M29 11.5 C30.5 8.5 32 6 33.5 5 C35.5 6 36.8 8.5 36.8 11.5Z" fill="#2f8cf5"/>
<path d="M31.8 10 C46 10 55 19 55 31 C55 45 45 52 31.8 52 C18.5 52 8.5 45 8.5 31 C8.5 19 17.5 10 31.8 10Z" fill="url(#rh)"/>
<path d="M32 16 C44.5 16 51.4 21 51.4 29.5 C51.4 37.8 43 42.2 32 42.2 C21 42.2 12.8 37.8 12.8 29.5 C12.8 21 19.5 16 32 16Z" fill="url(#vis)"/>
<g fill="#7fe8ff" filter="url(#gl)"><rect x="20" y="27" width="6" height="10" rx="3"/><rect x="38" y="27" width="6" height="10" rx="3"/></g>
<rect x="20.4" y="27.4" width="5.2" height="9.4" rx="2.6" fill="#fff"/>
<rect x="38.2" y="27.4" width="5.2" height="9.4" rx="2.6" fill="#fff"/>
</svg>
</div></body></html>
